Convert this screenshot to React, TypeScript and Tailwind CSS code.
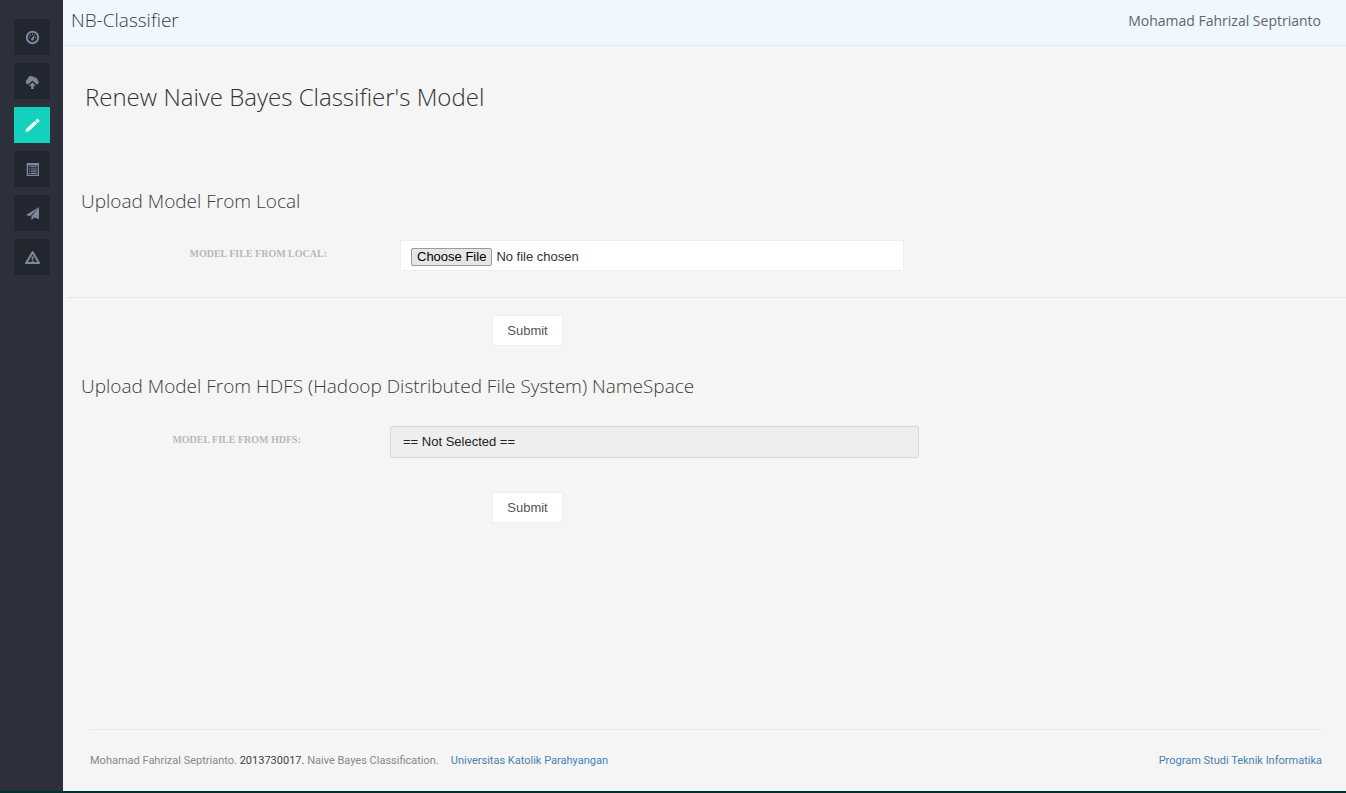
import React from "react";

type NavItem = { label: string; active?: boolean; icon: React.ReactNode };

const navItems: NavItem[] = [
  {
    label: "Dashboard",
    icon: (
      <>
        <circle cx="8.5" cy="8.5" r="5.7" fill="none" stroke="currentColor" strokeWidth="2" />
        <path d="M7.4 9.6 11 5.2 9.6 10.4Z" />
        <circle cx="5.4" cy="8.6" r="0.7" />
        <circle cx="6.4" cy="6.4" r="0.7" />
        <circle cx="8.5" cy="5.3" r="0.7" />
        <circle cx="11.6" cy="8.6" r="0.7" />
        <circle cx="8.5" cy="10.2" r="1.3" />
      </>
    ),
  },
  {
    label: "Upload",
    icon: (
      <>
        <path d="M4.2 11.5A2.7 2.7 0 0 1 1.7 8.9 2.7 2.7 0 0 1 3.6 6.3 3.7 3.7 0 0 1 7.2 3a3.8 3.8 0 0 1 3.1 1.6 3 3 0 0 1 3.4 2.7 2.3 2.3 0 0 1-.9 4.2L8.4 7.4Z" />
        <path d="m8.4 9.3 3.4 3.6H9.7V16H7.1v-3.1H5Z" />
      </>
    ),
  },
  {
    label: "Renew model",
    active: true,
    icon: <path d="M1.3 15 2.5 11.4 10.6 4.1 13.1 6.6 5 14ZM11.3 3.5 12.6 2.2q.8-.8 1.6 0l1 1q.8.8 0 1.6L13.8 6Z" />,
  },
  {
    label: "Results",
    icon: (
      <path
        fillRule="evenodd"
        d="M2.7 2H15v13H2.7ZM4 4.4v9.3h9.7V4.4ZM4.8 5.2H6v1.1H4.8Zm2 0h6v1.1h-6Zm-2 2.2H6v1.1H4.8Zm2 0h6v1.1h-6Zm-2 2.2H6v1.1H4.8Zm2 0h6v1.1h-6Zm-2 2.2H6v1.1H4.8Zm2 0h6v1.1h-6Z"
      />
    ),
  },
  {
    label: "Send",
    icon: (
      <>
        <path d="M2 10 15 2 6.2 11.2Z" />
        <path d="M15 2v12.2l-4.6-1.8L7.4 15v-3.4Z" />
      </>
    ),
  },
  {
    label: "Alerts",
    icon: (
      <path
        fillRule="evenodd"
        d="M8.6 2q.6 0 .9.6l6.6 11.2q.5 1.2-.7 1.2H1.8q-1.2 0-.7-1.2L7.7 2.6q.3-.6.9-.6ZM8.6 5.2 4 13.1h3.6v-1.3h2v1.3h3.6ZM7.4 7.6h2.4L9.2 11H8Z"
      />
    ),
  },
];

function Sidebar() {
  return (
    <nav aria-label="Main" className="w-[63px] shrink-0 bg-[#2c303b] pt-[19px] pl-[14px]">
      <ul className="flex flex-col gap-2">
        {navItems.map((item) => (
          <li key={item.label}>
            <a
              href="#"
              aria-label={item.label}
              aria-current={item.active ? "page" : undefined}
              className={
                item.active
                  ? "flex size-9 items-center justify-center bg-[#14d1be] text-white"
                  : "flex size-9 items-center justify-center bg-[#22262f] text-[#7d879b]"
              }
            >
              <svg viewBox="0 0 16 16" fill="currentColor" className="size-4" aria-hidden="true">
                {item.icon}
              </svg>
            </a>
          </li>
        ))}
      </ul>
    </nav>
  );
}

function SectionTitle({ children }: { children: React.ReactNode }) {
  return (
    <h2 className="pl-[18px] font-['Open_Sans',sans-serif] text-[19px] leading-7 font-light text-[#3c3c3c]">
      {children}
    </h2>
  );
}

function SubmitButton() {
  return (
    <button
      type="submit"
      className="ml-[429px] block h-[31px] w-[71px] rounded-xs border border-[#efefef] bg-white text-[13px] text-[#555]"
    >
      Submit
    </button>
  );
}

const labelClass =
  "shrink-0 pt-1.5 text-right font-['Liberation_Serif',serif] text-[10px] leading-4 font-bold text-[#b8b8b8] uppercase";

export default function App() {
  return (
    <div className="flex min-h-screen border-b-2 border-[#03302c] bg-[#f5f5f5] font-['Open_Sans',sans-serif]">
      <Sidebar />
      <div className="flex min-w-0 flex-1 flex-col">
        <header className="flex h-[46px] items-center justify-between border-b border-[#e2e8ee] bg-[#eff7ff] pr-[25px] pb-1 pl-2">
          <div className="text-[19px] font-light text-[#3c3c3c]">NB-Classifier</div>
          <div className="text-[14px] text-[#666]">Mohamad Fahrizal Septrianto</div>
        </header>

        <main className="flex-1">
          <h1 className="pt-8 pl-[22px] text-[24px] leading-[38px] font-light text-[#333]">
            Renew Naive Bayes Classifier's Model
          </h1>

          <form className="pt-[71px] font-['Liberation_Sans',sans-serif]">
            <SectionTitle>Upload Model From Local</SectionTitle>
            <div className="flex items-start pt-[25px]">
              <label htmlFor="local-file" className={`${labelClass} w-[264px]`}>
                Model file from local:
              </label>
              <input
                id="local-file"
                type="file"
                className="ml-[73px] h-[31px] w-[504px] border border-[#efefef] bg-white pt-1.5 pl-2.5 text-[13px] leading-5 text-[#333] file:mr-1 file:h-[18px] file:rounded-xs file:border file:border-solid file:border-[#999] file:bg-[#e6e6e6] file:px-[5px] file:text-[13px] file:leading-4 file:text-black"
              />
            </div>
            <hr className="mt-[26px] mb-[17px] ml-1 border-[#e6e6e6]" />
            <SubmitButton />
          </form>

          <form className="pt-[26px] font-['Liberation_Sans',sans-serif]">
            <SectionTitle>Upload Model From HDFS (Hadoop Distributed File System) NameSpace</SectionTitle>
            <div className="flex items-start pt-[26px] pb-[34px]">
              <label htmlFor="hdfs-file" className={`${labelClass} w-[238px]`}>
                Model file from HDFS:
              </label>
              <select
                id="hdfs-file"
                className="ml-[89px] h-8 w-[529px] appearance-none rounded-xs border border-[#d8d8d8] bg-[#eee] pl-3 text-[13px] text-[#222]"
              >
                <option>== Not Selected ==</option>
              </select>
            </div>
            <SubmitButton />
          </form>
        </main>

        <footer className="mr-6 ml-[27px] flex h-[62px] items-center justify-between border-t border-[#e8e8e8] pt-0.5 font-[Roboto,sans-serif] text-[11px] text-[#888]">
          <p>
            Mohamad Fahrizal Septrianto. <span className="text-[#444]">2013730017.</span> Naive Bayes Classification.
            <a href="#" className="ml-3 text-[#4682b4]">
              Universitas Katolik Parahyangan
            </a>
          </p>
          <a href="#" className="text-[#4682b4]">
            Program Studi Teknik Informatika
          </a>
        </footer>
      </div>
    </div>
  );
}
